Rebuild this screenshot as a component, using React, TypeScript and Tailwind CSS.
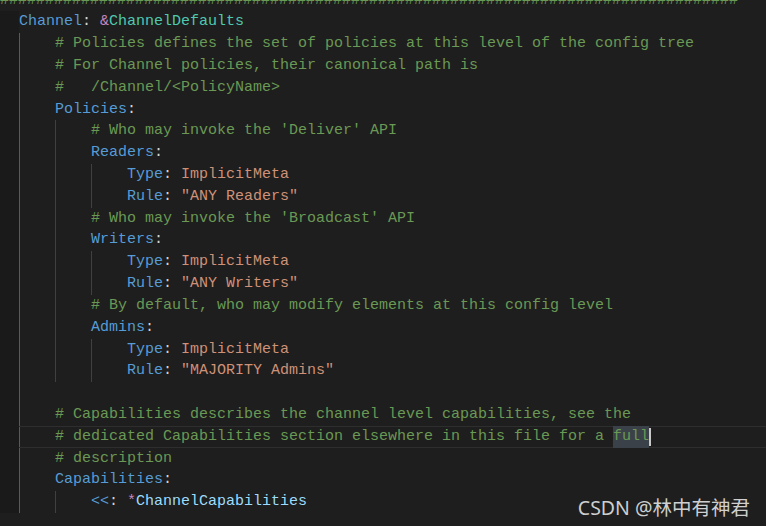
import React from 'react';

type Kind = 'cm' | 'key' | 'p' | 'str' | 'amp' | 'anc' | 'ali' | 'sel';
type Tok = [string, Kind];

const color: Record<Kind, string> = {
  cm: 'text-[#6a9955]',
  key: 'text-[#569cd6]',
  p: 'text-[#d4d4d4]',
  str: 'text-[#ce9178]',
  amp: 'text-[#c586c0]',
  anc: 'text-[#4ec9b0]',
  ali: 'text-[#9cdcfe]',
  sel: 'text-[#6a9955] bg-[#3b4148]',
};

const key = (k: string): Tok[] => [[k, 'key'], [':', 'p']];
const kv = (k: string, v: string): Tok[] => [[k, 'key'], [': ', 'p'], [v, 'str']];

const lines: { indent: number; toks: Tok[]; current?: boolean; cursor?: boolean }[] = [
  { indent: 0, toks: [['Channel', 'key'], [': ', 'p'], ['&', 'amp'], ['ChannelDefaults', 'anc']] },
  { indent: 1, toks: [['# Policies defines the set of policies at this level of the config tree', 'cm']] },
  { indent: 1, toks: [['# For Channel policies, their canonical path is', 'cm']] },
  { indent: 1, toks: [['#   /Channel/<PolicyName>', 'cm']] },
  { indent: 1, toks: key('Policies') },
  { indent: 2, toks: [["# Who may invoke the 'Deliver' API", 'cm']] },
  { indent: 2, toks: key('Readers') },
  { indent: 3, toks: kv('Type', 'ImplicitMeta') },
  { indent: 3, toks: kv('Rule', '"ANY Readers"') },
  { indent: 2, toks: [["# Who may invoke the 'Broadcast' API", 'cm']] },
  { indent: 2, toks: key('Writers') },
  { indent: 3, toks: kv('Type', 'ImplicitMeta') },
  { indent: 3, toks: kv('Rule', '"ANY Writers"') },
  { indent: 2, toks: [['# By default, who may modify elements at this config level', 'cm']] },
  { indent: 2, toks: key('Admins') },
  { indent: 3, toks: kv('Type', 'ImplicitMeta') },
  { indent: 3, toks: kv('Rule', '"MAJORITY Admins"') },
  { indent: 1, toks: [] },
  { indent: 1, toks: [['# Capabilities describes the channel level capabilities, see the', 'cm']] },
  {
    indent: 1,
    current: true,
    cursor: true,
    toks: [['# dedicated Capabilities section elsewhere in this file for a ', 'cm'], ['full', 'sel']],
  },
  { indent: 1, toks: [['# description', 'cm']] },
  { indent: 1, toks: key('Capabilities') },
  { indent: 2, toks: [['<<', 'key'], [': ', 'p'], ['*', 'amp'], ['ChannelCapabilities', 'ali']] },
];

const App: React.FC = () => {
  return (
    <div className="relative h-[526px] w-[766px] overflow-hidden bg-[#1e1e1e] font-['Liberation_Mono',monospace] text-[15px]">
      <div className="mt-[-10.5px]">
        {/* banner comment, mostly scrolled off */}
        <div className="h-[21.82px] whitespace-pre leading-[21.82px] text-[#6a9955]">{'#'.repeat(82)}</div>

        <div className="flex">
          {/* gutter */}
          <div className="w-[19px] shrink-0 bg-[#1a1a1a]" />

          <div className="flex-1">
            {lines.map((line, i) => (
              <div
                key={i}
                className={
                  'flex h-[21.82px] items-stretch whitespace-pre leading-[21.82px] ' +
                  (line.current ? 'border-y border-[#2e2e2e]' : '')
                }
              >
                {Array.from({ length: line.indent }).map((_, g) => (
                  <span
                    key={g}
                    className={
                      'w-[36px] shrink-0 border-l ' + (g === 0 ? 'border-[#5a5a5a]' : 'border-[#404040]')
                    }
                  />
                ))}
                <span className="flex items-center">
                  {line.toks.map(([t, k], j) => (
                    <span key={j} className={color[k]}>
                      {t}
                    </span>
                  ))}
                  {line.cursor && <span className="h-[18px] w-[2px] bg-[#c8c8c8]" />}
                </span>
              </div>
            ))}
          </div>
        </div>
      </div>

      {/* watermark */}
      <div className="absolute bottom-[5px] right-[16px] font-['Noto_Sans','Noto_Sans_CJK_SC',sans-serif] text-[19.5px] leading-[26px] text-[#cfcfcf]">
        CSDN @林中有神君
      </div>
    </div>
  );
};

export default App;
